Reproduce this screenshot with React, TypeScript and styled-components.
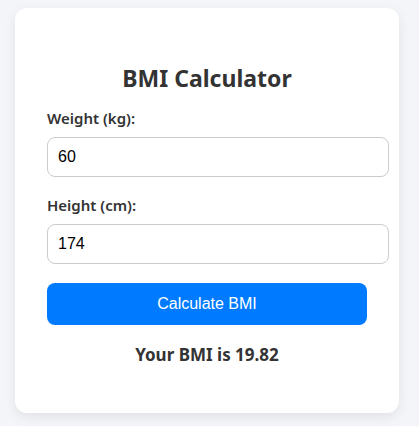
import React, { useState } from "react";
import styled, { createGlobalStyle } from "styled-components";

const Global = createGlobalStyle`
  html, body { margin: 0; padding: 0; background: #ffffff; }
  body { font-family: "Noto Sans", "Open Sans", sans-serif; }
`;

const Page = styled.div`
  background: #f4f5f9;
  height: 426px;
  padding: 8px 0 0 15px;
  box-sizing: border-box;
`;

const Card = styled.div`
  width: 384px;
  box-sizing: border-box;
  padding: 32px 32px 46px;
  background: #ffffff;
  border-radius: 12px;
  box-shadow: 0 4px 12px rgba(0, 0, 0, 0.08);
  color: #333333;
`;

const Title = styled.h2`
  margin: 22px 0 14px;
  font-size: 23px;
  font-weight: 700;
  text-align: center;
  line-height: 32px;
`;

const Field = styled.div`
  margin-bottom: 18px;
`;

const Label = styled.label`
  display: block;
  font-size: 15px;
  font-weight: 600;
  line-height: 20px;
  margin-bottom: 9px;
`;

const Input = styled.input`
  width: 100%;
  padding: 10px;
  border: 1px solid #cccccc;
  border-radius: 8px;
  font-family: "Liberation Sans", Arial, sans-serif;
  font-size: 16px;
  line-height: 18px;
  color: #000;
  outline: none;
  display: block;
  margin: 0;
`;

const Button = styled.button`
  display: block;
  width: 320px;
  height: 42px;
  margin-top: 19px;
  border: none;
  border-radius: 8px;
  background: #007bff;
  color: #ffffff;
  font-family: "Liberation Sans", Arial, sans-serif;
  font-size: 16px;
  cursor: pointer;
`;

const Result = styled.div`
  margin-top: 18px;
  text-align: center;
  font-size: 17px;
  font-weight: 700;
  line-height: 24px;
`;

export default function App() {
  const [w, setW] = useState("60");
  const [h, setH] = useState("174");
  return (
    <>
      <Global />
      <Page>
        <Card>
          <Title>BMI Calculator</Title>
          <Field>
            <Label>Weight (kg):</Label>
            <Input value={w} onChange={(e) => setW(e.target.value)} />
          </Field>
          <Field>
            <Label>Height (cm):</Label>
            <Input value={h} onChange={(e) => setH(e.target.value)} />
          </Field>
          <Button>Calculate BMI</Button>
          <Result>Your BMI is 19.82</Result>
        </Card>
      </Page>
    </>
  );
}
